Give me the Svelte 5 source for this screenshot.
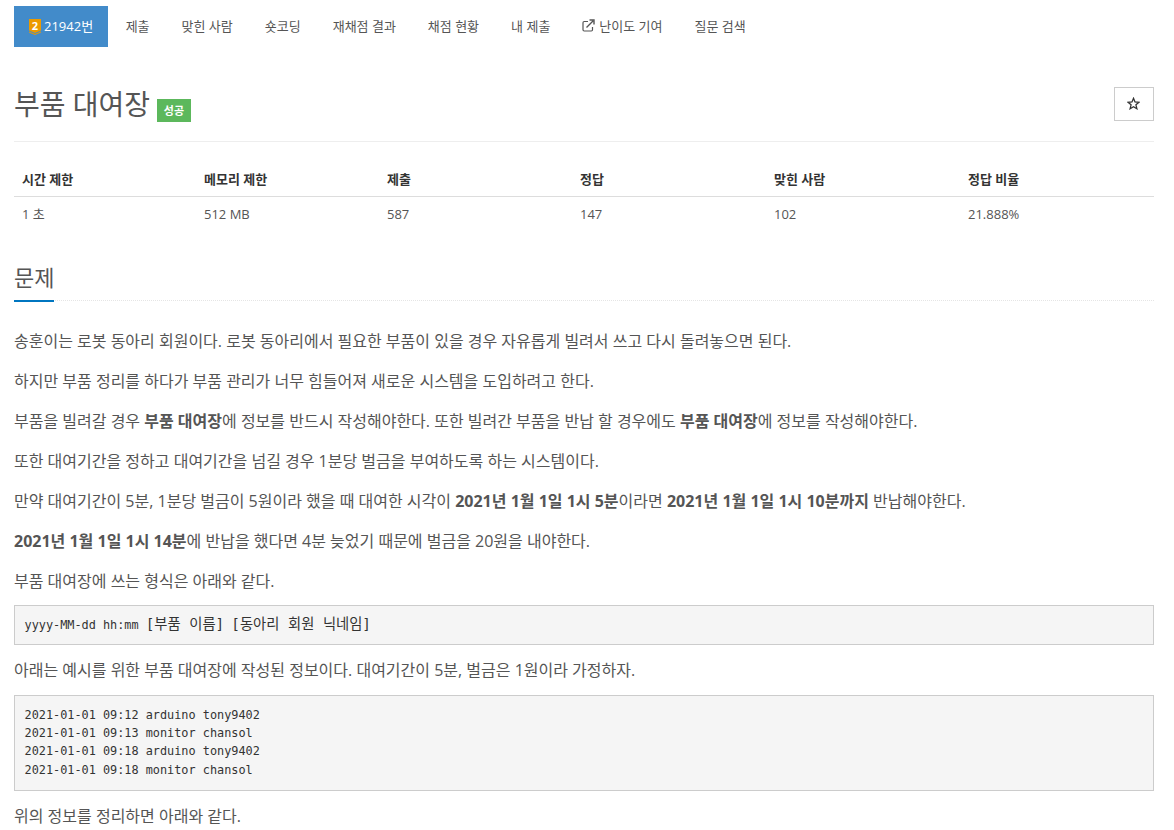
<script>
  let tabs = [
    { label: "제출" },
    { label: "맞힌 사람" },
    { label: "숏코딩" },
    { label: "재채점 결과" },
    { label: "채점 현황" },
    { label: "내 제출" },
    { label: "난이도 기여", external: true },
    { label: "질문 검색" }
  ];

  let headers = ["시간 제한", "메모리 제한", "제출", "정답", "맞힌 사람", "정답 비율"];
  let values = ["1 초", "512 MB", "587", "147", "102", "21.888%"];
  let widths = [182, 183, 193, 194, 194, 194];
</script>

<div class="page">
  <ul class="tabs">
    <li class="active">
      <svg class="medal" width="12" height="18" viewBox="0 -2 12 18">
        <path d="M0 0H12V11.500L6 14L0 11.500Z" fill="#ec9a00" />
        <path d="M0 13L6 15.500L12 13" fill="none" stroke="#ec9a00" stroke-width="1" />
        <text x="6" y="11" text-anchor="middle" class="medal-num">2</text>
      </svg>
      21942번
    </li>
    {#each tabs as tab}
      <li>
        {#if tab.external}
          <svg class="ext" width="13" height="13" viewBox="0 0 13 13">
            <path d="M6 2.5H2.2Q1 2.5 1 3.7V10.8Q1 12 2.2 12H9.3Q10.500 12 10.500 10.800V8" fill="none" stroke="#555" stroke-width="1.200" />
            <path d="M4.500 8.500L11 2M7.500 1H12V5.500" fill="none" stroke="#555" stroke-width="1.400" />
          </svg>
        {/if}
        {tab.label}
      </li>
    {/each}
  </ul>

  <div class="title-row">
    <h1>부품 대여장 <span class="badge">성공</span></h1>
    <button class="star" aria-label="즐겨찾기">
      <svg width="13" height="13" viewBox="0 0 24 24">
        <path d="M12 2.500L14.800 9.200L22 9.800L16.500 14.500L18.200 21.600L12 17.800L5.800 21.600L7.500 14.500L2 9.800L9.200 9.200Z" fill="none" stroke="#333" stroke-width="2.400" />
      </svg>
    </button>
  </div>

  <table>
    <colgroup>
      {#each widths as w}
        <col style="width: {w}px" />
      {/each}
    </colgroup>
    <thead>
      <tr>
        {#each headers as h}
          <th>{h}</th>
        {/each}
      </tr>
    </thead>
    <tbody>
      <tr>
        {#each values as v}
          <td>{v}</td>
        {/each}
      </tr>
    </tbody>
  </table>

  <div class="headline"><h2>문제</h2></div>

  <section class="desc">
    <p>송훈이는 로봇 동아리 회원이다. 로봇 동아리에서 필요한 부품이 있을 경우 자유롭게 빌려서 쓰고 다시 돌려놓으면 된다.</p>
    <p>하지만 부품 정리를 하다가 부품 관리가 너무 힘들어져 새로운 시스템을 도입하려고 한다.</p>
    <p>부품을 빌려갈 경우 <strong>부품 대여장</strong>에 정보를 반드시 작성해야한다. 또한 빌려간 부품을 반납 할 경우에도 <strong>부품 대여장</strong>에 정보를 작성해야한다.</p>
    <p>또한 대여기간을 정하고 대여기간을 넘길 경우 1분당 벌금을 부여하도록 하는 시스템이다.</p>
    <p>만약 대여기간이 5분, 1분당 벌금이 5원이라 했을 때 대여한 시각이 <strong>2021년 1월 1일 1시 5분</strong>이라면 <strong>2021년 1월 1일 1시 10분까지</strong> 반납해야한다.</p>
    <p><strong>2021년 1월 1일 1시 14분</strong>에 반납을 했다면 4분 늦었기 때문에 벌금을 20원을 내야한다.</p>
    <p class="before-pre">부품 대여장에 쓰는 형식은 아래와 같다.</p>
    <pre class="format">yyyy-MM-dd hh:mm <span class="ko">[부품 이름]</span> <span class="ko">[동아리 회원 닉네임]</span></pre>
    <p>아래는 예시를 위한 부품 대여장에 작성된 정보이다. 대여기간이 5분, 벌금은 1원이라 가정하자.</p>
    <pre class="sample">2021-01-01 09:12 arduino tony9402
2021-01-01 09:13 monitor chansol
2021-01-01 09:18 arduino tony9402
2021-01-01 09:18 monitor chansol</pre>
    <p>위의 정보를 정리하면 아래와 같다.</p>
  </section>
</div>

<style>
  :global(body) {
    background: #fff;
  }

  .page {
    padding: 6px 20px 0 14px;
    font-family: "Open Sans", "Noto Sans CJK KR", sans-serif;
    font-size: 14px;
    color: #555;
  }

  .tabs {
    display: flex;
    margin: 0;
    padding: 0;
    list-style: none;
    font-size: 13px;
  }

  .tabs li {
    display: flex;
    align-items: center;
    gap: 4px;
    box-sizing: border-box;
    height: 41px;
    padding: 0 16px 2px;
    color: #555;
  }

  .tabs li.active {
    background: #428bca;
    color: #fff;
    margin-right: 1.500px;
    padding: 0 15px 2px;
    gap: 3px;
  }

  .medal {
    margin-top: 1px;
  }

  .medal-num {
    font-size: 11px;
    font-weight: 700;
    fill: #fff;
    font-family: "Open Sans", sans-serif;
  }

  .title-row {
    display: flex;
    justify-content: space-between;
    align-items: flex-start;
    height: 34px;
    margin-top: 40px;
    padding-bottom: 20px;
    border-bottom: 1px solid #eee;
  }

  h1 {
    height: 34px;
    margin: 0;
    font-size: 28px;
    font-weight: 400;
    line-height: 34px;
    color: #555;
  }

  .badge {
    display: inline-block;
    padding: 4px 6.500px;
    background: #5cb85c;
    color: #fff;
    font-size: 11px;
    font-weight: 700;
    line-height: 15px;
    vertical-align: baseline;
  }

  .star {
    box-sizing: border-box;
    width: 40px;
    height: 34px;
    padding: 0 2px 2px 0;
    background: #fff;
    border: 1px solid #ccc;
    display: flex;
    align-items: center;
    justify-content: center;
  }

  table {
    width: 1140px;
    margin-top: 20px;
    border-collapse: collapse;
    table-layout: fixed;
    font-size: 13px;
  }

  th {
    padding: 8px;
    text-align: left;
    font-weight: 700;
    color: #333;
    border-bottom: 1px solid #ddd;
    line-height: 18px;
  }

  td {
    padding: 8px;
    line-height: 18px;
    color: #555;
  }

  .headline {
    margin-top: 31px;
    border-bottom: 1px dotted #e5e5e5;
  }

  h2 {
    width: fit-content;
    margin: 0 0 -2px;
    padding: 0 0 8px;
    font-size: 22px;
    font-weight: 400;
    line-height: 30px;
    color: #555;
    border-bottom: 2px solid #0076c0;
  }

  .desc {
    margin-top: 24.500px;
  }

  p {
    margin: 0 0 10px;
    font-size: 16px;
    line-height: 30.100px;
  }

  .before-pre {
    margin-bottom: 9px;
  }

  pre {
    margin: 0 0 10px;
    padding: 9.500px;
    background: #f5f5f5;
    border: 1px solid #ccc;
    font-family: "DejaVu Sans Mono", "Noto Sans CJK KR", monospace;
    font-size: 11.850px;
    line-height: 18.400px;
    color: #333;
  }

  .ko {
    font-size: 14.300px;
    line-height: 1;
  }

  .format {
    padding-top: 10px;
    padding-bottom: 9px;
  }

  .sample {
    padding-top: 10px;
    padding-bottom: 10.500px;
  }
</style>
